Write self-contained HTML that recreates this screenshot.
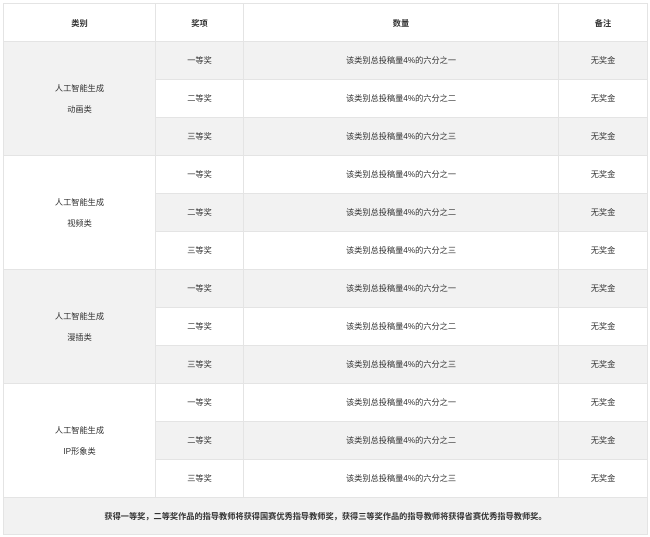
<!DOCTYPE html>
<html><head><meta charset="utf-8"><style>
html,body{margin:0;padding:0;background:#fff;width:650px;height:537px;overflow:hidden}
table{position:absolute;left:3px;top:3px;border-collapse:collapse;width:644px;font-family:"Liberation Sans","Noto Sans CJK SC",sans-serif;font-size:8.2px;color:#333;table-layout:fixed}
td{border:1px solid #e4e4e4;text-align:center;height:37px;padding:0;line-height:21px}
tr.g td{background:#f2f2f2}
th{border:1px solid #e4e4e4;height:37px;padding:0;font-weight:bold;font-size:8.2px;color:#333}
.foot td{font-weight:bold;height:36px}
</style></head><body>
<table>
<colgroup><col style="width:152px"><col style="width:88px"><col style="width:315px"><col style="width:89px"></colgroup>
<tr><th>类别</th><th>奖项</th><th>数量</th><th>备注</th></tr>
<tr class="g"><td rowspan="3">人工智能生成<br>动画类</td><td>一等奖</td><td>该类别总投稿量4%的六分之一</td><td>无奖金</td></tr>
<tr><td>二等奖</td><td>该类别总投稿量4%的六分之二</td><td>无奖金</td></tr>
<tr class="g"><td>三等奖</td><td>该类别总投稿量4%的六分之三</td><td>无奖金</td></tr>
<tr><td rowspan="3">人工智能生成<br>视频类</td><td>一等奖</td><td>该类别总投稿量4%的六分之一</td><td>无奖金</td></tr>
<tr class="g"><td>二等奖</td><td>该类别总投稿量4%的六分之二</td><td>无奖金</td></tr>
<tr><td>三等奖</td><td>该类别总投稿量4%的六分之三</td><td>无奖金</td></tr>
<tr class="g"><td rowspan="3">人工智能生成<br>漫插类</td><td>一等奖</td><td>该类别总投稿量4%的六分之一</td><td>无奖金</td></tr>
<tr><td>二等奖</td><td>该类别总投稿量4%的六分之二</td><td>无奖金</td></tr>
<tr class="g"><td>三等奖</td><td>该类别总投稿量4%的六分之三</td><td>无奖金</td></tr>
<tr><td rowspan="3">人工智能生成<br>IP形象类</td><td>一等奖</td><td>该类别总投稿量4%的六分之一</td><td>无奖金</td></tr>
<tr class="g"><td>二等奖</td><td>该类别总投稿量4%的六分之二</td><td>无奖金</td></tr>
<tr><td>三等奖</td><td>该类别总投稿量4%的六分之三</td><td>无奖金</td></tr>
<tr class="g foot"><td colspan="4">获得一等奖，二等奖作品的指导教师将获得国赛优秀指导教师奖，获得三等奖作品的指导教师将获得省赛优秀指导教师奖。</td></tr>
</table>
</body></html>
